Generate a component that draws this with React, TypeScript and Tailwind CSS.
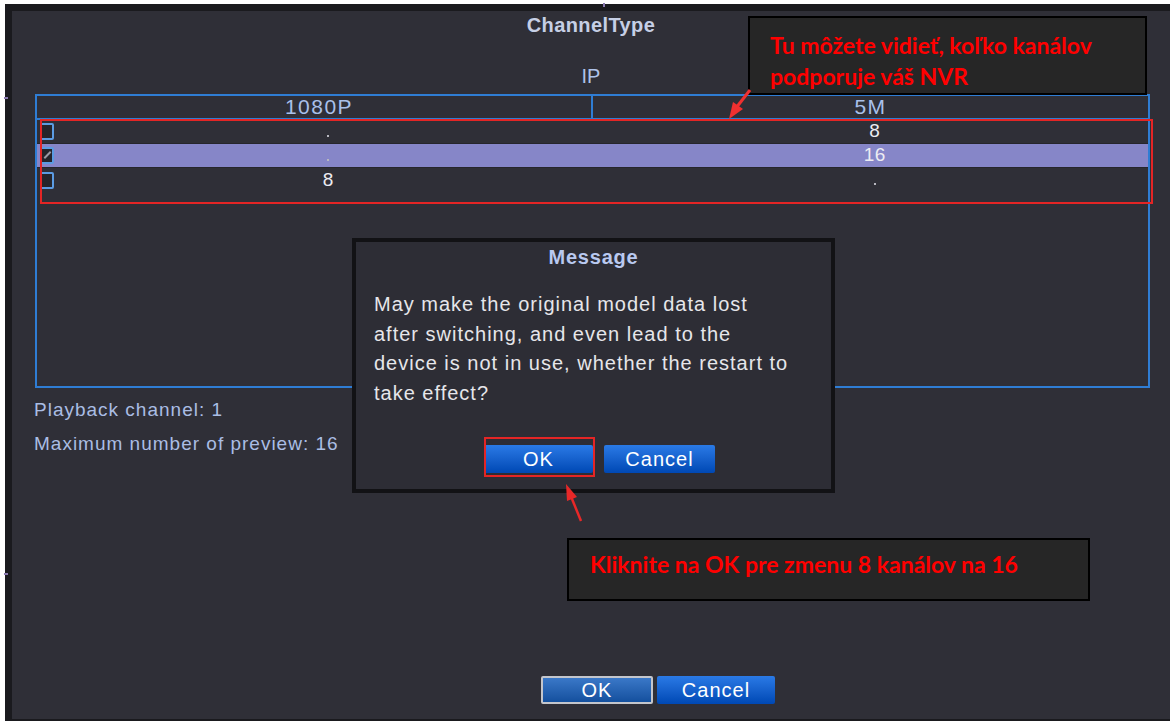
import React from 'react';

const ui = { fontFamily: '"Liberation Sans", Arial, sans-serif' };
const note = { fontFamily: 'Lato, "Open Sans", sans-serif' };

interface Row {
    hd: string;
    fm: string;
    picked?: boolean;
}

const rows: Row[] = [
    { hd: '.', fm: '8' },
    { hd: '.', fm: '16', picked: true },
    { hd: '8', fm: '.' },
];

const Cell: React.FC<{ value: string }> = ({ value }) => (
    <div className="flex flex-1 items-center justify-center">
        {value === '.' ? (
            <span className="mt-[8px] h-[2px] w-[2px] bg-[#b8b8c0]" />
        ) : (
            <span className="text-[19px] tracking-[0.5px] text-[#ececf2]">{value}</span>
        )}
    </div>
);

const CheckBox: React.FC<{ on?: boolean }> = ({ on }) => (
    <div className="relative ml-[3px] h-[17px] w-[14px] rounded-[2px] border-2 border-[#5b9be2] bg-[#25252b]">
        {on && <span className="absolute left-[1px] top-[5px] h-[2px] w-[9px] -rotate-45 bg-[#9a9aa4]" />}
    </div>
);

const BlueButton: React.FC<{ label: string; w: string; focus?: boolean }> = ({ label, w, focus }) => (
    <button
        type="button"
        className={`flex h-[28px] ${w} items-center justify-center rounded-[2px] bg-gradient-to-b from-[#2a7ae6] to-[#0048b4] text-[20px] tracking-[1px] text-white ${focus ? 'border-2 border-[#c4c6cc] from-[#3a78c8] to-[#14509e]' : ''}`}
    >
        {label}
    </button>
);

export default function App() {
    return (
        <div className="relative h-[726px] w-[1170px] overflow-hidden bg-white pb-[5px] pl-[5px] pt-[4px]" style={ui}>
            <div className="h-[717px] bg-[#1a1a1e] pb-[2px] pl-[7px] pt-[7px]">
                <div className="flex h-full flex-col bg-[#2f2f37] pb-[15px]">
                    <div className="h-[28px] text-center text-[20px] font-bold leading-[28px] tracking-[0.4px] text-[#c6cfe6]">
                        ChannelType
                    </div>
                    <div className="mt-[23px] h-[28px] text-center text-[20px] leading-[28px] text-[#aec3ea]">IP</div>

                    <div className="ml-[23px] mt-[4px] flex h-[294px] w-[1115px] flex-col border-2 border-[#2f7dd4]">
                        <div className="flex h-[24px] shrink-0 border-b-2 border-[#2f7dd4] text-[21px] leading-[22px] tracking-[1.5px] text-[#a9c0ea]">
                            <div className="w-[556px] border-r-2 border-[#2f7dd4] pl-[10px] text-center">1080P</div>
                            <div className="flex-1 text-center">5M</div>
                        </div>
                        {rows.map((r, i) => (
                            <div
                                key={i}
                                className={`flex h-[24px] shrink-0 items-center ${i < 2 ? 'border-b border-[#26262c]' : ''} ${r.picked ? 'bg-[#8686c8]' : ''}`}
                            >
                                <div className="w-[18px]">
                                    <CheckBox on={r.picked} />
                                </div>
                                <Cell value={r.hd} />
                                <Cell value={r.fm} />
                            </div>
                        ))}
                    </div>

                    <div className="ml-[22px] mt-[10px] h-[24px] text-[19px] leading-[24px] tracking-[1px] text-[#aabde4]">
                        Playback channel: 1
                    </div>
                    <div className="ml-[22px] mt-[10px] h-[24px] text-[19px] leading-[24px] tracking-[1px] text-[#aabde4]">
                        Maximum number of preview: 16
                    </div>

                    <div className="flex-1" />

                    <div className="ml-[529px] flex gap-[4px]">
                        <BlueButton label="OK" w="w-[112px]" focus />
                        <BlueButton label="Cancel" w="w-[118px]" />
                    </div>
                </div>
            </div>

            {/* message dialog */}
            <div className="absolute left-[352px] top-[238px] flex h-[255px] w-[483px] flex-col border-4 border-[#121215] bg-[#2d2d35]">
                <div className="h-[30px] text-center text-[20px] font-bold leading-[30px] tracking-[0.8px] text-[#b9c9f0]">
                    Message
                </div>
                <p className="ml-[18px] mt-[18px] text-[20px] leading-[29.5px] tracking-[1px] text-[#e6e6ea]">
                    May make the original model data lost
                    <br />
                    after switching, and even lead to the
                    <br />
                    device is not in use, whether the restart to
                    <br />
                    take effect?
                </p>
                <div className="ml-[128px] mt-[37px] flex gap-[11px]">
                    <BlueButton label="OK" w="w-[109px]" />
                    <BlueButton label="Cancel" w="w-[111px]" />
                </div>
            </div>

            {/* annotations */}
            <div className="absolute left-[40px] top-[119px] h-[85px] w-[1113px] border-2 border-[#e42525]" />
            <div className="absolute left-[484px] top-[437px] h-[40px] w-[111px] border-2 border-[#e42525]" />

            <div className="absolute left-[748px] top-[16px] h-[79px] w-[399px] border-2 border-black bg-[#262626] pl-[20px] pt-[12px]">
                <div className="text-[23px] font-bold leading-[31px] text-[#ff0000]" style={note}>
                    Tu môžete vidieť, koľko kanálov
                    <br />
                    podporuje váš NVR
                </div>
            </div>

            <div className="absolute left-[567px] top-[538px] h-[63px] w-[523px] border-2 border-black bg-[#262626] pl-[21px] pt-[9px]">
                <div className="text-[23px] font-bold leading-[30px] text-[#ff0000]" style={note}>
                    Kliknite na OK pre zmenu 8 kanálov na 16
                </div>
            </div>

            <svg className="pointer-events-none absolute inset-0" width="1170" height="726" viewBox="0 0 1170 726">
                <line x1="750" y1="90" x2="736" y2="108" stroke="#f03030" strokeWidth="3" />
                <polygon points="729,119 733,102 743,109" fill="#f03030" />
                <line x1="581" y1="521" x2="570" y2="494" stroke="#e82828" strokeWidth="2.5" />
                <polygon points="566,484 567,501 577,497" fill="#e82828" />
                <rect x="603" y="3" width="2" height="4" fill="#8a7ab0" />
                <rect x="4" y="97" width="4" height="2" fill="#8a7ab0" />
                <rect x="4" y="573" width="4" height="2" fill="#8a7ab0" />
            </svg>
        </div>
    );
}
